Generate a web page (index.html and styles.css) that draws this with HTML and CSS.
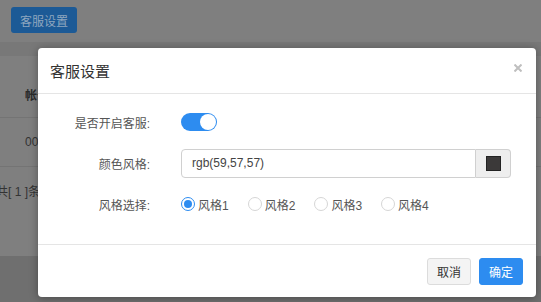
FILE: index.html
```html
<!DOCTYPE html>
<html lang="zh-CN">
<head>
    <meta charset="UTF-8">
    <title>客服设置</title>
    <link rel="stylesheet" href="styles.css">
</head>
<body>
    <div class="page">
        <div class="toolbar">
            <button class="btn-page">客服设置</button>
        </div>
        <div class="band"></div>
        <div class="table">
            <div class="table-top"></div>
            <div class="table-head">帐号</div>
            <div class="table-row">00123456</div>
        </div>
        <div class="pager"><span>共[ 1 ]条记录</span></div>
        <div class="page-bottom"></div>
    </div>

    <div class="modal">
        <div class="modal-header">
            <span class="modal-title">客服设置</span>
            <svg class="modal-close" width="8" height="8" viewBox="0 0 8 8">
                <path d="M0.5 0.5 L7.5 7.5 M7.5 0.5 L0.5 7.5" stroke="#bfbfbf" stroke-width="2"/>
            </svg>
        </div>

        <div class="modal-body">
            <div class="form-row">
                <label class="form-label">是否开启客服:</label>
                <div class="form-control">
                    <span class="switch on"><span class="switch-knob"></span></span>
                </div>
            </div>

            <div class="form-row">
                <label class="form-label">颜色风格:</label>
                <div class="form-control">
                    <div class="input-group">
                        <input class="color-input" type="text" value="rgb(59,57,57)">
                        <span class="input-addon"><span class="swatch" style="background: rgb(59,57,57)"></span></span>
                    </div>
                </div>
            </div>

            <div class="form-row">
                <label class="form-label">风格选择:</label>
                <div class="form-control radios">
                    <span class="radio checked"><i></i>风格1</span>
                    <span class="radio"><i></i>风格2</span>
                    <span class="radio"><i></i>风格3</span>
                    <span class="radio"><i></i>风格4</span>
                </div>
            </div>
        </div>

        <div class="modal-footer">
            <button class="btn btn-default">取消</button>
            <button class="btn btn-primary">确定</button>
        </div>
    </div>
</body>
</html>
```

FILE: styles.css
```css
body {
    margin: 0;
    width: 541px;
    height: 302px;
    overflow: hidden;
    position: relative;
    font-family: "Liberation Sans", "Noto Sans CJK SC", sans-serif;
    font-size: 12px;
    background: #7f7f7f;
}
.page {
    height: 302px;
    display: flex;
    flex-direction: column;
}
.toolbar {
    height: 42px;
    padding: 7px 0 0 11px;
    box-sizing: border-box;
}
.btn-page {
    width: 66px;
    height: 26px;
    padding: 0;
    border: none;
    border-radius: 3px;
    background: #1c5a96;
    color: #8ea6bf;
    font-family: inherit;
    font-size: 12px;
}
.band {
    height: 14px;
    background: #787878;
}
.table-top {
    height: 19px;
}
.table-head {
    height: 43px;
    line-height: 43px;
    padding-left: 25px;
    font-weight: bold;
    color: #2a2a2a;
    border-bottom: 1px solid #747474;
    box-sizing: border-box;
}
.table-row {
    height: 49px;
    line-height: 49px;
    padding-left: 25px;
    color: #333;
    border-bottom: 1px solid #747474;
    box-sizing: border-box;
}
.pager {
    height: 89px;
    padding-top: 15px;
    box-sizing: border-box;
    color: #333;
}
.pager span {
    margin-left: -4px;
}
.page-bottom {
    flex: 1;
    background: #6f6f6f;
}

.modal {
    position: absolute;
    left: 38px;
    top: 48px;
    width: 498px;
    height: 249px;
    background: #fff;
    border-radius: 4px;
    box-shadow: 0 1px 8px rgba(0,0,0,0.35);
    display: flex;
    flex-direction: column;
}
.modal-header {
    height: 45px;
    padding: 0 14px 0 12px;
    border-bottom: 1px solid #e5e5e5;
    display: flex;
    align-items: center;
    justify-content: space-between;
}
.modal-title {
    font-size: 15px;
    color: #333;
}
.modal-close {
    margin-bottom: 5px;
}
.modal-body {
    flex: 1;
    padding-top: 13px;
    display: flex;
    flex-direction: column;
    gap: 11px;
}
.form-row {
    height: 30px;
    display: flex;
    align-items: center;
}
.form-label {
    width: 112px;
    text-align: right;
    color: #555;
}
.form-control {
    margin-left: 31px;
    width: 330px;
    display: flex;
    align-items: center;
}
.switch {
    width: 36px;
    height: 18px;
    border-radius: 9px;
    background: #2d8cf0;
    position: relative;
}
.switch-knob {
    position: absolute;
    top: 1px;
    right: 1px;
    width: 16px;
    height: 16px;
    border-radius: 50%;
    background: #fff;
}
.input-group {
    width: 100%;
    height: 29px;
    display: flex;
}
.color-input {
    flex: 1;
    min-width: 0;
    margin: 0;
    padding: 0 10px;
    border: 1px solid #d0d0d0;
    border-radius: 4px 0 0 4px;
    font-family: inherit;
    font-size: 12px;
    color: #444;
    outline: none;
}
.input-addon {
    width: 34px;
    background: #eee;
    border: 1px solid #d0d0d0;
    border-left: none;
    border-radius: 0 4px 4px 0;
    display: flex;
    align-items: center;
    justify-content: center;
}
.swatch {
    width: 13px;
    height: 13px;
    border: 1px solid #222;
}
.radio {
    display: flex;
    align-items: center;
    margin-right: 19px;
    color: #555;
}
.radio i {
    width: 12px;
    height: 12px;
    border: 1px solid #d6d6d6;
    border-radius: 50%;
    margin-right: 3px;
    position: relative;
}
.radio.checked i {
    border-color: #2d8cf0;
}
.radio.checked i::after {
    content: "";
    position: absolute;
    left: 2px;
    top: 2px;
    width: 8px;
    height: 8px;
    border-radius: 50%;
    background: #2d8cf0;
}
.modal-footer {
    height: 53px;
    padding: 13px 13px 0 0;
    border-top: 1px solid #e5e5e5;
    box-sizing: border-box;
    display: flex;
    justify-content: flex-end;
    gap: 8px;
}
.btn {
    height: 27px;
    padding: 0 9px;
    border-radius: 3px;
    font-family: inherit;
    font-size: 12px;
}
.btn-default {
    background: #f4f4f4;
    border: 1px solid #dcdcdc;
    color: #333;
}
.btn-primary {
    background: #2d8cf0;
    border: 1px solid #2d8cf0;
    color: #fff;
}
```
